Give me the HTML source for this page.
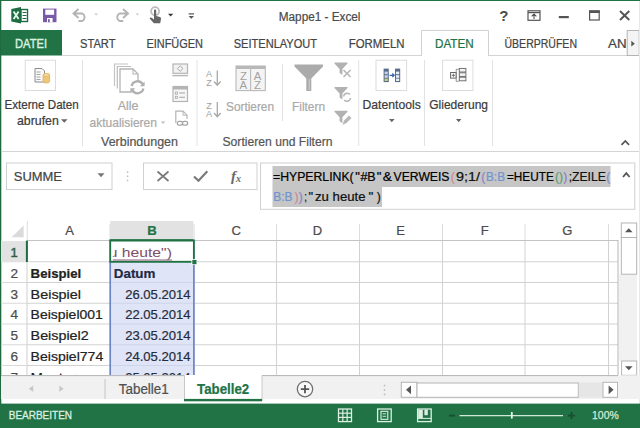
<!DOCTYPE html>
<html><head><meta charset="utf-8"><title>Mappe1 - Excel</title>
<style>
html,body{margin:0;padding:0;width:640px;height:428px;overflow:hidden;background:#fff}
svg{display:block;font-family:"Liberation Sans","DejaVu Sans",sans-serif}
text{white-space:pre}
</style></head><body>
<svg width="640" height="428" viewBox="0 0 640 428">
<rect x="0" y="0" width="640" height="428" fill="#fff" />
<text x="278.75" y="20.5" font-size="12.5" fill="#4a4a4a" font-weight="400" textLength="81.75" lengthAdjust="spacingAndGlyphs"  stroke="#4a4a4a" stroke-width="0.22">Mappe1 - Excel</text>
<rect x="0" y="0" width="640" height="1" fill="#217346" />
<rect x="0" y="0" width="1.3" height="428" fill="#1f6a41" />
<path d="M11.3 9 L21 7 V23.4 L11.3 21.4 Z" fill="#1e6c41"/>
<rect x="21" y="9.5" width="6.5" height="12" fill="#fff" stroke="#1e6c41" stroke-width="1.4" />
<line x1="22.5" y1="12.5" x2="26.5" y2="12.5" stroke="#1e6c41" stroke-width="1"/>
<line x1="22.5" y1="15.5" x2="26.5" y2="15.5" stroke="#1e6c41" stroke-width="1"/>
<line x1="22.5" y1="18.5" x2="26.5" y2="18.5" stroke="#1e6c41" stroke-width="1"/>
<path d="M13.6 11.5 L18.6 19 M18.6 11.5 L13.6 19" stroke="#e6f3ea" stroke-width="1.9" fill="none"/>
<path d="M43 8.6 H56.5 V22.2 H43 Z" fill="#7a5aa6"/>
<rect x="45.3" y="9.6" width="8.8" height="5.2" fill="#fff" />
<rect x="47" y="18" width="5.6" height="4.2" fill="#fff" />
<rect x="48" y="19.2" width="1.8" height="3" fill="#7a5aa6" />
<path d="M78.5 9 L73.5 13.5 L78.5 18 M74 13.5 H82.3 A4.2 4.2 0 0 1 82.3 21 H78.5" stroke="#b4b4b4" stroke-width="1.9" fill="none"/>
<path d="M94.3 13.6 H98 L96.15 15.6 Z" fill="#c8c8c8"/>
<path d="M123 9 L128 13.5 L123 18 M127.5 13.5 H119.5 A4.2 4.2 0 0 0 119.5 21 H123.3" stroke="#b4b4b4" stroke-width="1.9" fill="none"/>
<path d="M135.6 13.6 H139.2 L137.4 15.6 Z" fill="#c8c8c8"/>
<circle cx="155.1" cy="11.2" r="4" fill="none" stroke="#bdbdbd" stroke-width="1.8"/>
<path d="M154 10.6 a1.1 1.1 0 0 1 2.2 0 V16 L160 17 Q161.3 17.5 161 19 L160.2 23.3 H153.9 L149.6 18.4 Q150.3 17 151.7 17.8 L154 19.6 Z" fill="#666"/>
<path d="M168 13.8 H173.2 L170.6 16.6 Z" fill="#333"/>
<rect x="188.6" y="13.3" width="5.4" height="1.2" fill="#555" />
<path d="M188.6 15.9 H194 L191.3 18.8 Z" fill="#555"/>
<text x="499.3" y="21.2" font-size="15" font-weight="700" fill="#4a4a4a">?</text>
<rect x="528" y="10.8" width="12" height="9.5" fill="none" stroke="#555" stroke-width="1.2" />
<line x1="528" y1="12.6" x2="540" y2="12.6" stroke="#555" stroke-width="1.2"/>
<path d="M534 19 V14.2 M531.6 16.4 L534 14 L536.4 16.4" stroke="#555" stroke-width="1.1" fill="none"/>
<rect x="558.8" y="16" width="10" height="2.2" fill="#555" />
<rect x="589.6" y="11" width="9.6" height="9" fill="none" stroke="#555" stroke-width="1.2" />
<rect x="589" y="10.4" width="10.8" height="2.6" fill="#555" />
<path d="M620 11 L629.3 20 M629.3 11 L620 20" stroke="#555" stroke-width="1.9" fill="none"/>
<rect x="1" y="30" width="61" height="25.5" fill="#217346" />
<line x1="62" y1="55.5" x2="640" y2="55.5" stroke="#d4d4d4" stroke-width="1"/>
<path d="M421.5 56 V30.5 H488.5 V56" fill="#fff" stroke="#d0d0d0"/>
<text x="15" y="47.5" font-size="12" fill="#d9f3e2" font-weight="400" textLength="32" lengthAdjust="spacingAndGlyphs" stroke="#d9f3e2" stroke-width="0.35">DATEI</text>
<text x="80" y="47.5" font-size="12" fill="#444" font-weight="400" textLength="35.5" lengthAdjust="spacingAndGlyphs"  stroke="#444" stroke-width="0.22">START</text>
<text x="146.4" y="47.5" font-size="12" fill="#444" font-weight="400" textLength="56.6" lengthAdjust="spacingAndGlyphs"  stroke="#444" stroke-width="0.22">EINFÜGEN</text>
<text x="233.75" y="47.5" font-size="12" fill="#444" font-weight="400" textLength="83.25" lengthAdjust="spacingAndGlyphs"  stroke="#444" stroke-width="0.22">SEITENLAYOUT</text>
<text x="348.75" y="47.5" font-size="12" fill="#444" font-weight="400" textLength="55.75" lengthAdjust="spacingAndGlyphs"  stroke="#444" stroke-width="0.22">FORMELN</text>
<text x="435" y="47.5" font-size="12" fill="#217346" font-weight="400" textLength="38.75" lengthAdjust="spacingAndGlyphs"  stroke="#217346" stroke-width="0.22">DATEN</text>
<text x="504.5" y="47.5" font-size="12" fill="#444" font-weight="400" textLength="72.5" lengthAdjust="spacingAndGlyphs"  stroke="#444" stroke-width="0.22">ÜBERPRÜFEN</text>
<text x="608" y="47.5" font-size="12" fill="#444" font-weight="400" textLength="18.5" lengthAdjust="spacingAndGlyphs"  stroke="#444" stroke-width="0.22">AN</text>
<rect x="627.2" y="30.5" width="12" height="25" fill="#f4f4f4" stroke="#b4b4b4" stroke-width="1" />
<path d="M631.3 40.8 L634.8 43.7 L631.3 46.6 Z" fill="#555"/>
<line x1="1" y1="151.5" x2="640" y2="151.5" stroke="#d4d4d4" stroke-width="1"/>
<line x1="82.5" y1="60" x2="82.5" y2="146" stroke="#e2e2e2" stroke-width="1"/>
<line x1="197" y1="60" x2="197" y2="146" stroke="#e2e2e2" stroke-width="1"/>
<line x1="358.75" y1="60" x2="358.75" y2="146" stroke="#e2e2e2" stroke-width="1"/>
<line x1="424.5" y1="60" x2="424.5" y2="146" stroke="#e2e2e2" stroke-width="1"/>
<line x1="492.5" y1="60" x2="492.5" y2="146" stroke="#e2e2e2" stroke-width="1"/>
<line x1="282.5" y1="64" x2="282.5" y2="121" stroke="#e2e2e2" stroke-width="1"/>
<text x="4.5" y="109.25" font-size="13" fill="#3b3b3b" font-weight="400" textLength="74.25" lengthAdjust="spacingAndGlyphs"  stroke="#3b3b3b" stroke-width="0.22">Externe Daten</text>
<text x="17" y="125" font-size="13" fill="#3b3b3b" font-weight="400" textLength="41.75" lengthAdjust="spacingAndGlyphs"  stroke="#3b3b3b" stroke-width="0.22">abrufen</text>
<text x="117.75" y="110.3" font-size="13" fill="#a9a9a9" font-weight="400" textLength="20.75" lengthAdjust="spacingAndGlyphs"  stroke="#a9a9a9" stroke-width="0.22">Alle</text>
<text x="89.5" y="127" font-size="13" fill="#a9a9a9" font-weight="400" textLength="67.5" lengthAdjust="spacingAndGlyphs"  stroke="#a9a9a9" stroke-width="0.22">aktualisieren</text>
<text x="101" y="146" font-size="13" fill="#555" font-weight="400" textLength="77" lengthAdjust="spacingAndGlyphs"  stroke="#555" stroke-width="0.22">Verbindungen</text>
<text x="226" y="110.5" font-size="13" fill="#a9a9a9" font-weight="400" textLength="48" lengthAdjust="spacingAndGlyphs"  stroke="#a9a9a9" stroke-width="0.22">Sortieren</text>
<text x="292" y="110.5" font-size="13" fill="#a9a9a9" font-weight="400" textLength="33" lengthAdjust="spacingAndGlyphs"  stroke="#a9a9a9" stroke-width="0.22">Filtern</text>
<text x="222.5" y="146" font-size="13" fill="#555" font-weight="400" textLength="110.0" lengthAdjust="spacingAndGlyphs"  stroke="#555" stroke-width="0.22">Sortieren und Filtern</text>
<text x="362.5" y="109.25" font-size="13" fill="#3b3b3b" font-weight="400" textLength="58.25" lengthAdjust="spacingAndGlyphs"  stroke="#3b3b3b" stroke-width="0.22">Datentools</text>
<text x="429.25" y="109.25" font-size="13" fill="#3b3b3b" font-weight="400" textLength="58.75" lengthAdjust="spacingAndGlyphs"  stroke="#3b3b3b" stroke-width="0.22">Gliederung</text>
<rect x="25.2" y="60.2" width="30.3" height="30.3" fill="#fff" stroke="#dcdcdc" stroke-width="1" />
<path d="M35 68.5 H42 L44.5 71 V82 H35 Z" fill="#fafafa" stroke="#8a8a8a" stroke-width="1"/>
<line x1="36.5" y1="72" x2="40.5" y2="72" stroke="#9a9a9a" stroke-width="0.9"/>
<line x1="36.5" y1="74.5" x2="40.5" y2="74.5" stroke="#9a9a9a" stroke-width="0.9"/>
<line x1="36.5" y1="77" x2="40.5" y2="77" stroke="#9a9a9a" stroke-width="0.9"/>
<line x1="36.5" y1="79.5" x2="40.5" y2="79.5" stroke="#9a9a9a" stroke-width="0.9"/>
<path d="M43 75 a3.3 1.4 0 0 1 6.6 0 V81.6 a3.3 1.4 0 0 1 -6.6 0 Z" fill="#eec77a" stroke="#d9a94f" stroke-width="0.7"/>
<ellipse cx="46.3" cy="75" rx="3.3" ry="1.4" fill="#f6dea6" stroke="#d9a94f" stroke-width="0.6"/>
<path d="M61 119.3 H67.6 L64.3 122.8 Z" fill="#666"/>
<path d="M114.5 86 V64 H128" fill="none" stroke="#c4c4c4" stroke-width="1.2"/>
<path d="M117.3 88.5 V66.5 H131" fill="none" stroke="#bcbcbc" stroke-width="1.2"/>
<path d="M120 69 H133 L138 74 V92 H120 Z" fill="#fff" stroke="#b4b4b4" stroke-width="1.3"/>
<path d="M133 69 V74 H138" fill="none" stroke="#b4b4b4" stroke-width="1.1"/>
<circle cx="137.5" cy="87.3" r="7.6" fill="#fff"/>
<path d="M131.6 86 A6 6 0 0 1 142.6 84.2 M143.4 88.6 A6 6 0 0 1 132.4 90.4" fill="none" stroke="#b0b0b0" stroke-width="2.3"/>
<path d="M144.6 81.5 V86.3 H139.8 Z M130.4 93.1 V88.3 H135.2 Z" fill="#b0b0b0"/>
<path d="M160.8 121.4 H165.4 L163.1 123.9 Z" fill="#c0c0c0"/>
<rect x="173" y="64" width="14.5" height="9.3" fill="#f2f2f2" stroke="#b4b4b4" stroke-width="1.2" />
<line x1="172.5" y1="75.6" x2="188" y2="75.6" stroke="#b4b4b4" stroke-width="1.4"/>
<path d="M180.2 65.8 L183 68.6 L180.2 71.4 L177.4 68.6 Z" fill="none" stroke="#aaa" stroke-width="1"/>
<rect x="173" y="86.5" width="14.5" height="15" fill="#f6f6f6" stroke="#b4b4b4" stroke-width="1.2" />
<rect x="173" y="86.5" width="14.5" height="3" fill="#b4b4b4" />
<rect x="175.3" y="92" width="2.2" height="2.2" fill="none" stroke="#aaa" stroke-width="0.8" />
<line x1="179.3" y1="93" x2="185" y2="93" stroke="#aaa" stroke-width="1.1"/>
<rect x="175.3" y="96.3" width="2.2" height="2.2" fill="none" stroke="#aaa" stroke-width="0.8" />
<line x1="179.3" y1="97.3" x2="185" y2="97.3" stroke="#aaa" stroke-width="1.1"/>
<path d="M175.8 123 V111.2 H183 L187 115.2 V119" fill="none" stroke="#b4b4b4" stroke-width="1.2"/>
<path d="M183 111.2 V115.2 H187" fill="none" stroke="#b4b4b4" stroke-width="1"/>
<rect x="177.3" y="121.3" width="5.4" height="3.8" rx="1.9" fill="none" stroke="#a4a4a4" stroke-width="1.2"/>
<rect x="182.3" y="121.3" width="5.4" height="3.8" rx="1.9" fill="none" stroke="#a4a4a4" stroke-width="1.2"/>
<text x="209" y="77.3" font-size="9.2" fill="#a0a0a0" text-anchor="middle">A</text>
<text x="209" y="85.9" font-size="9.2" fill="#a0a0a0" text-anchor="middle">Z</text>
<path d="M217.3 70.5 V85 M214 81.5 L217.3 85.2 L220.6 81.5" stroke="#a8a8a8" stroke-width="1.3" fill="none"/>
<text x="209" y="108.8" font-size="9.2" fill="#a0a0a0" text-anchor="middle">Z</text>
<text x="209" y="117.4" font-size="9.2" fill="#a0a0a0" text-anchor="middle">A</text>
<path d="M217.3 102.0 V116.5 M214 113.0 L217.3 116.7 L220.6 113.0" stroke="#a8a8a8" stroke-width="1.3" fill="none"/>
<rect x="236" y="66" width="29.3" height="24.6" fill="#f4f4f4" stroke="#b8b8b8" stroke-width="1.1" />
<rect x="236" y="66" width="29.3" height="3" fill="#b8b8b8" />
<line x1="250.6" y1="66" x2="250.6" y2="90.6" stroke="#b8b8b8" stroke-width="1.1"/>
<text x="243.4" y="80" font-size="11.4" fill="#a2a2a2" text-anchor="middle">Z</text>
<text x="243.4" y="89.2" font-size="11.4" fill="#a2a2a2" text-anchor="middle">A</text>
<text x="257.6" y="80" font-size="11.4" fill="#a2a2a2" text-anchor="middle">A</text>
<text x="257.6" y="89.2" font-size="11.4" fill="#a2a2a2" text-anchor="middle">Z</text>
<path d="M294.5 64.5 H323 V66.5 L311.3 78.5 V91 H306.3 V78.5 L294.5 66.5 Z" fill="#ababab"/>
<path d="M309.3 79 V90" stroke="#c9c9c9" stroke-width="1.2"/>
<path d="M334.5 62.5 H347.5 V63.5 L342.4 69.0 V75.0 L339.6 73.0 V69.0 L334.5 63.5 Z" fill="#b2b2b2"/>
<path d="M343.5 70 L350.5 77 M350.5 70 L343.5 77" stroke="#b8b8b8" stroke-width="1.7"/>
<path d="M334.5 87 H347.5 V88 L342.4 93.5 V99.5 L339.6 97.5 V93.5 L334.5 88 Z" fill="#b2b2b2"/>
<path d="M343.6 96.5 A3.6 3.6 0 0 1 350 94.6 M350.6 98 A3.6 3.6 0 0 1 344.2 99.9" fill="none" stroke="#b8b8b8" stroke-width="1.6"/>
<path d="M334.5 110.8 H347.5 V111.8 L342.4 117.3 V123.3 L339.6 121.3 V117.3 L334.5 111.8 Z" fill="#b2b2b2"/>
<path d="M342.5 125 L344 120.5 L349 115.5 L351.5 118 L346.5 123 Z" fill="#b8b8b8"/>
<rect x="376" y="60.2" width="30.6" height="30.3" fill="#fff" stroke="#dcdcdc" stroke-width="1" />
<rect x="383.6" y="68.6" width="5.2" height="13.5" fill="#5a6e8c" />
<rect x="395" y="68.6" width="5.2" height="13.5" fill="#5a6e8c" />
<rect x="384.6" y="71.6" width="3.2" height="2.6" fill="#c8d4e6" />
<rect x="384.6" y="75.2" width="3.2" height="2.6" fill="#c8d4e6" />
<rect x="384.6" y="78.6" width="3.2" height="2.4" fill="#c9cf6a" />
<rect x="396" y="71.6" width="3.2" height="2.6" fill="#e6eef6" />
<rect x="396" y="75.2" width="3.2" height="2.6" fill="#e6eef6" />
<rect x="396" y="78.6" width="3.2" height="2.4" fill="#e6eef6" />
<path d="M389.6 75.3 H393.6 M392.3 73.5 L394.2 75.3 L392.3 77.1" stroke="#3c62a8" stroke-width="1.2" fill="none"/>
<path d="M389 119 H394.6 L391.8 122.3 Z" fill="#666"/>
<rect x="442.6" y="60.2" width="30.3" height="30.3" fill="#fff" stroke="#dcdcdc" stroke-width="1" />
<rect x="450.6" y="72.5" width="5.6" height="5.6" fill="#fff" stroke="#666" stroke-width="1" />
<path d="M451.8 75.3 H455 M453.4 73.7 V76.9" stroke="#666" stroke-width="0.9"/>
<path d="M458.8 69.3 H456.2 V81.3 H458.8" fill="none" stroke="#888" stroke-width="0.9"/>
<rect x="459.3" y="68.4" width="6.6" height="3.6" fill="#f4f4f4" stroke="#666" stroke-width="0.9" />
<rect x="459.3" y="72.8" width="6.6" height="3.6" fill="#f4f4f4" stroke="#666" stroke-width="0.9" />
<rect x="459.3" y="77.2" width="6.6" height="3.6" fill="#f4f4f4" stroke="#666" stroke-width="0.9" />
<path d="M456 119 H461.4 L458.7 122.3 Z" fill="#666"/>
<path d="M621.5 144.8 L625.3 141 L629.1 144.8" stroke="#555" stroke-width="1.7" fill="none"/>
<rect x="6.5" y="163" width="105.5" height="26.5" fill="#fff" stroke="#d0d0d0" stroke-width="1" />
<text x="13.75" y="180.75" font-size="12" fill="#444" font-weight="400" textLength="48.25" lengthAdjust="spacingAndGlyphs"  stroke="#444" stroke-width="0.22">SUMME</text>
<path d="M97.5 173.3 H104.5 L101 177.2 Z" fill="#777"/>
<rect x="126.8" y="171.3" width="1.5" height="1.5" fill="#bdbdbd" />
<rect x="126.8" y="175.5" width="1.5" height="1.5" fill="#bdbdbd" />
<rect x="126.8" y="179.8" width="1.5" height="1.5" fill="#bdbdbd" />
<rect x="143.5" y="163" width="113.5" height="26.5" fill="#fff" stroke="#d0d0d0" stroke-width="1" />
<path d="M157.5 171.5 L168.5 181 M168.5 171.5 L157.5 181" stroke="#7a7a7a" stroke-width="1.7" fill="none"/>
<path d="M194 176.5 L198.5 180.8 L207.3 171.3" stroke="#7a7a7a" stroke-width="2.2" fill="none"/>
<text x="231" y="181" font-family="Liberation Serif,serif" font-style="italic" font-size="15" fill="#6a6a6a" font-weight="700">f<tspan font-size="10" dy="0.5">x</tspan></text>
<rect x="260.5" y="163" width="374.3" height="46.3" fill="#fff" stroke="#d0d0d0" stroke-width="1" />
<rect x="272.5" y="166" width="338" height="21" fill="#c6c6c6" />
<rect x="272.5" y="186.5" width="109.5" height="20.5" fill="#c6c6c6" />
<text x="273" y="180.75" font-size="12.2" fill="#000" font-weight="400" textLength="80.7" lengthAdjust="spacingAndGlyphs"  stroke="#000" stroke-width="0.22">=HYPERLINK(</text>
<text x="355.2" y="180.75" font-size="12.2" fill="#000" font-weight="400" textLength="4.6" lengthAdjust="spacingAndGlyphs"  stroke="#000" stroke-width="0.22">"</text>
<text x="360.4" y="180.75" font-size="12.2" fill="#000" font-weight="400" textLength="15.3" lengthAdjust="spacingAndGlyphs"  stroke="#000" stroke-width="0.22">#B</text>
<text x="376.7" y="180.75" font-size="12.2" fill="#000" font-weight="400" textLength="4.6" lengthAdjust="spacingAndGlyphs"  stroke="#000" stroke-width="0.22">"</text>
<text x="382.8" y="180.75" font-size="12.2" fill="#000" font-weight="400" textLength="9.2" lengthAdjust="spacingAndGlyphs"  stroke="#000" stroke-width="0.22">&amp;</text>
<text x="393.6" y="180.75" font-size="12.2" fill="#000" font-weight="400" textLength="55.9" lengthAdjust="spacingAndGlyphs"  stroke="#000" stroke-width="0.22">VERWEIS</text>
<text x="452.7" y="180.75" font-size="12.2" fill="#d28c8c" font-weight="400" text-anchor="middle"  stroke="#d28c8c" stroke-width="0.22">(</text>
<text x="456" y="180.75" font-size="12.2" fill="#111" font-weight="400" textLength="24" lengthAdjust="spacingAndGlyphs"  stroke="#111" stroke-width="0.22">9;1/</text>
<text x="483.3" y="180.75" font-size="12.2" fill="#8f7fc0" font-weight="400" text-anchor="middle"  stroke="#8f7fc0" stroke-width="0.22">(</text>
<text x="486" y="180.75" font-size="12.2" fill="#6f95d0" font-weight="400" textLength="19" lengthAdjust="spacingAndGlyphs"  stroke="#6f95d0" stroke-width="0.22">B:B</text>
<text x="507" y="180.75" font-size="12.2" fill="#000" font-weight="400" textLength="46.75" lengthAdjust="spacingAndGlyphs"  stroke="#000" stroke-width="0.22">=HEUTE</text>
<text x="559" y="180.75" font-size="12.2" fill="#5f9f6f" font-weight="400" text-anchor="middle"  stroke="#5f9f6f" stroke-width="0.22">()</text>
<text x="565.3" y="180.75" font-size="12.2" fill="#8f7fc0" font-weight="400" text-anchor="middle"  stroke="#8f7fc0" stroke-width="0.22">)</text>
<text x="568.75" y="180.75" font-size="12.2" fill="#111" font-weight="400" textLength="37.0" lengthAdjust="spacingAndGlyphs"  stroke="#111" stroke-width="0.22">;ZEILE</text>
<text x="608.3" y="180.75" font-size="12.2" fill="#7f8fc8" font-weight="400" text-anchor="middle"  stroke="#7f8fc8" stroke-width="0.22">(</text>
<text x="273.2" y="201.25" font-size="12.2" fill="#6f95d0" font-weight="400" textLength="19.4" lengthAdjust="spacingAndGlyphs"  stroke="#6f95d0" stroke-width="0.22">B:B</text>
<text x="296.5" y="201.25" font-size="12.2" fill="#c88a9a" font-weight="400" text-anchor="middle"  stroke="#c88a9a" stroke-width="0.22">)</text>
<text x="300.7" y="201.25" font-size="12.2" fill="#8f7fc0" font-weight="400" text-anchor="middle"  stroke="#8f7fc0" stroke-width="0.22">)</text>
<text x="304.3" y="201.25" font-size="12.2" fill="#111" font-weight="400" textLength="2.7" lengthAdjust="spacingAndGlyphs"  stroke="#111" stroke-width="0.22">;</text>
<text x="308.4" y="201.25" font-size="12.2" fill="#111" font-weight="400" textLength="4.6" lengthAdjust="spacingAndGlyphs"  stroke="#111" stroke-width="0.22">"</text>
<text x="315" y="201.25" font-size="12.2" fill="#111" font-weight="400" textLength="50.5" lengthAdjust="spacingAndGlyphs"  stroke="#111" stroke-width="0.22">zu heute</text>
<text x="368.6" y="201.25" font-size="12.2" fill="#111" font-weight="400" textLength="4.8" lengthAdjust="spacingAndGlyphs"  stroke="#111" stroke-width="0.22">"</text>
<text x="378.8" y="201.25" font-size="12.2" fill="#111" font-weight="400" text-anchor="middle"  stroke="#111" stroke-width="0.22">)</text>
<path d="M623 177 L626.3 173.2 L629.6 177" stroke="#555" stroke-width="1.8" fill="none"/>
<rect x="110.3" y="221" width="83" height="18.6" fill="#e2e2e2" />
<rect x="1" y="241.3" width="25.5" height="20.6" fill="#e2e2e2" />
<rect x="110" y="262" width="84" height="113.5" fill="#dfe5f6" />
<line x1="110" y1="224" x2="110" y2="240.5" stroke="#dcdcdc" stroke-width="1"/>
<line x1="194" y1="224" x2="194" y2="240.5" stroke="#dcdcdc" stroke-width="1"/>
<line x1="276.5" y1="224" x2="276.5" y2="240.5" stroke="#dcdcdc" stroke-width="1"/>
<line x1="359.5" y1="224" x2="359.5" y2="240.5" stroke="#dcdcdc" stroke-width="1"/>
<line x1="442.5" y1="224" x2="442.5" y2="240.5" stroke="#dcdcdc" stroke-width="1"/>
<line x1="525" y1="224" x2="525" y2="240.5" stroke="#dcdcdc" stroke-width="1"/>
<line x1="608.5" y1="224" x2="608.5" y2="240.5" stroke="#dcdcdc" stroke-width="1"/>
<line x1="194" y1="240.5" x2="194" y2="375.3" stroke="#d2d2d2" stroke-width="1"/>
<line x1="276.5" y1="240.5" x2="276.5" y2="375.3" stroke="#d2d2d2" stroke-width="1"/>
<line x1="359.5" y1="240.5" x2="359.5" y2="375.3" stroke="#d2d2d2" stroke-width="1"/>
<line x1="442.5" y1="240.5" x2="442.5" y2="375.3" stroke="#d2d2d2" stroke-width="1"/>
<line x1="525" y1="240.5" x2="525" y2="375.3" stroke="#d2d2d2" stroke-width="1"/>
<line x1="608.5" y1="240.5" x2="608.5" y2="375.3" stroke="#d2d2d2" stroke-width="1"/>
<line x1="27" y1="241" x2="27" y2="375.3" stroke="#cfcfcf" stroke-width="1"/>
<line x1="1" y1="261.75" x2="27" y2="261.75" stroke="#d9d9d9" stroke-width="1"/>
<line x1="27" y1="261.75" x2="110" y2="261.75" stroke="#d2d2d2" stroke-width="1"/>
<line x1="110" y1="261.75" x2="194" y2="261.75" stroke="#cdd5ea" stroke-width="1"/>
<line x1="194" y1="261.75" x2="618" y2="261.75" stroke="#d2d2d2" stroke-width="1"/>
<line x1="1" y1="282.5" x2="27" y2="282.5" stroke="#d9d9d9" stroke-width="1"/>
<line x1="27" y1="282.5" x2="110" y2="282.5" stroke="#d2d2d2" stroke-width="1"/>
<line x1="110" y1="282.5" x2="194" y2="282.5" stroke="#cdd5ea" stroke-width="1"/>
<line x1="194" y1="282.5" x2="618" y2="282.5" stroke="#d2d2d2" stroke-width="1"/>
<line x1="1" y1="303.25" x2="27" y2="303.25" stroke="#d9d9d9" stroke-width="1"/>
<line x1="27" y1="303.25" x2="110" y2="303.25" stroke="#d2d2d2" stroke-width="1"/>
<line x1="110" y1="303.25" x2="194" y2="303.25" stroke="#cdd5ea" stroke-width="1"/>
<line x1="194" y1="303.25" x2="618" y2="303.25" stroke="#d2d2d2" stroke-width="1"/>
<line x1="1" y1="324.0" x2="27" y2="324.0" stroke="#d9d9d9" stroke-width="1"/>
<line x1="27" y1="324.0" x2="110" y2="324.0" stroke="#d2d2d2" stroke-width="1"/>
<line x1="110" y1="324.0" x2="194" y2="324.0" stroke="#cdd5ea" stroke-width="1"/>
<line x1="194" y1="324.0" x2="618" y2="324.0" stroke="#d2d2d2" stroke-width="1"/>
<line x1="1" y1="344.75" x2="27" y2="344.75" stroke="#d9d9d9" stroke-width="1"/>
<line x1="27" y1="344.75" x2="110" y2="344.75" stroke="#d2d2d2" stroke-width="1"/>
<line x1="110" y1="344.75" x2="194" y2="344.75" stroke="#cdd5ea" stroke-width="1"/>
<line x1="194" y1="344.75" x2="618" y2="344.75" stroke="#d2d2d2" stroke-width="1"/>
<line x1="1" y1="365.5" x2="27" y2="365.5" stroke="#d9d9d9" stroke-width="1"/>
<line x1="27" y1="365.5" x2="110" y2="365.5" stroke="#d2d2d2" stroke-width="1"/>
<line x1="110" y1="365.5" x2="194" y2="365.5" stroke="#cdd5ea" stroke-width="1"/>
<line x1="194" y1="365.5" x2="618" y2="365.5" stroke="#d2d2d2" stroke-width="1"/>
<line x1="27" y1="240.5" x2="618" y2="240.5" stroke="#c4c4c4" stroke-width="1"/>
<line x1="27.3" y1="221" x2="27.3" y2="240.5" stroke="#dedede" stroke-width="1"/>
<line x1="618" y1="240" x2="618" y2="375.8" stroke="#b4b4b4" stroke-width="1"/>
<path d="M23.6 225.6 V237.2 H11.6 Z" fill="#dadada"/>
<text x="69.6" y="235.3" font-size="13" fill="#4c4c4c" font-weight="400" text-anchor="middle"  stroke="#4c4c4c" stroke-width="0.22">A</text>
<text x="152.1" y="235.3" font-size="13.2" fill="#217346" font-weight="700" text-anchor="middle"  stroke="#217346" stroke-width="0.22">B</text>
<text x="236.3" y="235.3" font-size="13" fill="#4c4c4c" font-weight="400" text-anchor="middle"  stroke="#4c4c4c" stroke-width="0.22">C</text>
<text x="317.5" y="235.3" font-size="13" fill="#4c4c4c" font-weight="400" text-anchor="middle"  stroke="#4c4c4c" stroke-width="0.22">D</text>
<text x="400.7" y="235.3" font-size="13" fill="#4c4c4c" font-weight="400" text-anchor="middle"  stroke="#4c4c4c" stroke-width="0.22">E</text>
<text x="484.8" y="235.3" font-size="13" fill="#4c4c4c" font-weight="400" text-anchor="middle"  stroke="#4c4c4c" stroke-width="0.22">F</text>
<text x="567.2" y="235.3" font-size="13" fill="#4c4c4c" font-weight="400" text-anchor="middle"  stroke="#4c4c4c" stroke-width="0.22">G</text>
<clipPath id="gc"><rect x="0" y="220" width="618" height="155.3"/></clipPath>
<g clip-path="url(#gc)">
<text x="14.2" y="257.15" font-size="13.6" fill="#2f5f45" font-weight="400" text-anchor="middle"  stroke="#2f5f45" stroke-width="0.22">1</text>
<text x="14.2" y="277.9" font-size="13.6" fill="#4c4c4c" font-weight="400" text-anchor="middle"  stroke="#4c4c4c" stroke-width="0.22">2</text>
<text x="14.2" y="298.65" font-size="13.6" fill="#4c4c4c" font-weight="400" text-anchor="middle"  stroke="#4c4c4c" stroke-width="0.22">3</text>
<text x="14.2" y="319.4" font-size="13.6" fill="#4c4c4c" font-weight="400" text-anchor="middle"  stroke="#4c4c4c" stroke-width="0.22">4</text>
<text x="14.2" y="340.15" font-size="13.6" fill="#4c4c4c" font-weight="400" text-anchor="middle"  stroke="#4c4c4c" stroke-width="0.22">5</text>
<text x="14.2" y="360.9" font-size="13.6" fill="#4c4c4c" font-weight="400" text-anchor="middle"  stroke="#4c4c4c" stroke-width="0.22">6</text>
<text x="14.2" y="381.65" font-size="13.6" fill="#4c4c4c" font-weight="400" text-anchor="middle"  stroke="#4c4c4c" stroke-width="0.22">7</text>
<text x="30.6" y="277.8" font-size="13" fill="#222" font-weight="700" textLength="50.7" lengthAdjust="spacingAndGlyphs"  stroke="#222" stroke-width="0.22">Beispiel</text>
<text x="113.8" y="277.8" font-size="13" fill="#1f2a44" font-weight="700" textLength="41.6" lengthAdjust="spacingAndGlyphs"  stroke="#1f2a44" stroke-width="0.22">Datum</text>
<text x="30.6" y="298.55" font-size="13" fill="#222" font-weight="400" textLength="50.4" lengthAdjust="spacingAndGlyphs"  stroke="#222" stroke-width="0.22">Beispiel</text>
<text x="30.6" y="319.3" font-size="13" fill="#222" font-weight="400" textLength="72.2" lengthAdjust="spacingAndGlyphs"  stroke="#222" stroke-width="0.22">Beispiel001</text>
<text x="30.6" y="340.05" font-size="13" fill="#222" font-weight="400" textLength="58.15" lengthAdjust="spacingAndGlyphs"  stroke="#222" stroke-width="0.22">Beispiel2</text>
<text x="30.6" y="360.8" font-size="13" fill="#222" font-weight="400" textLength="72.65" lengthAdjust="spacingAndGlyphs"  stroke="#222" stroke-width="0.22">Beispiel774</text>
<text x="30.6" y="381.55" font-size="13" fill="#222" font-weight="400" textLength="45.4" lengthAdjust="spacingAndGlyphs"  stroke="#222" stroke-width="0.22">Muster</text>
<text x="125.2" y="298.55" font-size="13" fill="#262c40" font-weight="400" textLength="65.4" lengthAdjust="spacingAndGlyphs"  stroke="#262c40" stroke-width="0.22">26.05.2014</text>
<text x="125.2" y="319.3" font-size="13" fill="#262c40" font-weight="400" textLength="65.4" lengthAdjust="spacingAndGlyphs"  stroke="#262c40" stroke-width="0.22">22.05.2014</text>
<text x="125.2" y="340.05" font-size="13" fill="#262c40" font-weight="400" textLength="65.4" lengthAdjust="spacingAndGlyphs"  stroke="#262c40" stroke-width="0.22">23.05.2014</text>
<text x="125.2" y="360.8" font-size="13" fill="#262c40" font-weight="400" textLength="65.4" lengthAdjust="spacingAndGlyphs"  stroke="#262c40" stroke-width="0.22">24.05.2014</text>
<text x="125.2" y="381.55" font-size="13" fill="#262c40" font-weight="400" textLength="65.4" lengthAdjust="spacingAndGlyphs"  stroke="#262c40" stroke-width="0.22">25.05.2014</text>
</g>
<line x1="110.2" y1="262" x2="110.2" y2="375.3" stroke="#6b86c6" stroke-width="1.7"/>
<line x1="193.9" y1="262" x2="193.9" y2="375.3" stroke="#6b86c6" stroke-width="1.7"/>
<rect x="110.2" y="240.4" width="83.7" height="21.4" fill="#fff" stroke="#217346" stroke-width="1.9" />
<line x1="110.3" y1="240.3" x2="193.2" y2="240.3" stroke="#217346" stroke-width="1.9"/>
<rect x="1" y="241.3" width="25.2" height="20.6" fill="#e2e2e2" />
<text x="14.2" y="256.75" font-size="13" fill="#2f5f45" font-weight="400" text-anchor="middle" stroke="#2f5f45" stroke-width="0.45">1</text>
<line x1="26.9" y1="240.6" x2="26.9" y2="262" stroke="#1f6a41" stroke-width="2"/>
<rect x="191.4" y="259.2" width="5.6" height="5.6" fill="#fff" />
<rect x="192.3" y="260" width="4.2" height="4.2" fill="#217346" />
<clipPath id="ac"><rect x="112.8" y="242" width="79" height="19"/></clipPath>
<g clip-path="url(#ac)">
<text x="171.9" y="256.7" font-size="13.3" text-anchor="end" fill="#7d5068" textLength="71" lengthAdjust="spacingAndGlyphs">zu heute&quot;)</text>
<line x1="112" y1="260" x2="171.9" y2="260" stroke="#8a5a72" stroke-width="1"/>
</g>
<rect x="619" y="274.5" width="18" height="86.5" fill="#f1f1f1" />
<rect x="621.3" y="223" width="15.4" height="14.5" fill="#fff" stroke="#b4b4b4" stroke-width="1" />
<path d="M625 232.2 H632.6 L628.8 228.2 Z" fill="#555"/>
<rect x="621.3" y="237.5" width="15.4" height="36.7" fill="#fff" stroke="#b4b4b4" stroke-width="1" />
<rect x="621.6" y="361" width="15.1" height="14.3" fill="#fff" stroke="#b4b4b4" stroke-width="1" />
<path d="M625 366.2 H632.6 L628.8 370.2 Z" fill="#555"/>
<rect x="639" y="1" width="1" height="403" fill="#dcefe3" />
<rect x="1" y="375.3" width="639" height="23.7" fill="#f1f1f1" />
<line x1="1" y1="375.6" x2="618" y2="375.6" stroke="#b4b4b4" stroke-width="1"/>
<rect x="184.5" y="375" width="77.5" height="24.5" fill="#fff" />
<line x1="184.5" y1="375.3" x2="184.5" y2="399" stroke="#c8c8c8" stroke-width="1"/>
<line x1="262" y1="375.3" x2="262" y2="399" stroke="#c8c8c8" stroke-width="1"/>
<rect x="184" y="398.9" width="78.2" height="2.4" fill="#217346" />
<line x1="105" y1="379" x2="105" y2="399" stroke="#c4c4c4" stroke-width="1"/>
<path d="M33.2 385.5 V392 L28.8 388.75 Z" fill="#c8c8c8"/>
<path d="M59.3 385.5 V392 L63.7 388.75 Z" fill="#c8c8c8"/>
<text x="118.75" y="393.5" font-size="14" fill="#505050" font-weight="400" textLength="50.0" lengthAdjust="spacingAndGlyphs"  stroke="#505050" stroke-width="0.22">Tabelle1</text>
<text x="197" y="393.5" font-size="14" fill="#217346" font-weight="700" textLength="52.25" lengthAdjust="spacingAndGlyphs"  stroke="#217346" stroke-width="0.22">Tabelle2</text>
<circle cx="305" cy="389.1" r="7.7" fill="#f8f8f8" stroke="#707070" stroke-width="1.3"/>
<path d="M300.8 389.1 H309.2 M305 384.9 V393.3" stroke="#555" stroke-width="1.8"/>
<rect x="383.8" y="384.8" width="1.5" height="1.5" fill="#b8b8b8" />
<rect x="383.8" y="389.3" width="1.5" height="1.5" fill="#b8b8b8" />
<rect x="383.8" y="393.7" width="1.5" height="1.5" fill="#b8b8b8" />
<rect x="401.3" y="382.3" width="15.7" height="15" fill="#fff" stroke="#b4b4b4" stroke-width="1" />
<path d="M411 385.4 V394.2 L406 389.8 Z" fill="#555"/>
<rect x="417" y="383" width="161.3" height="14.3" fill="#fff" stroke="#b4b4b4" stroke-width="1" />
<rect x="578.8" y="382.5" width="24" height="15" fill="#e6e6e6" />
<rect x="603" y="382.3" width="14.5" height="15" fill="#fff" stroke="#b4b4b4" stroke-width="1" />
<path d="M608.6 385.4 V394.2 L613.6 389.8 Z" fill="#555"/>
<rect x="0" y="403.6" width="640" height="24.4" fill="#217346" />
<text x="8.75" y="419.25" font-size="11" fill="#daf0e1" font-weight="400" textLength="63.25" lengthAdjust="spacingAndGlyphs" stroke="#daf0e1" stroke-width="0.3">BEARBEITEN</text>
<text x="592" y="419.25" font-size="11" fill="#d4ecdc" font-weight="400" textLength="26.75" lengthAdjust="spacingAndGlyphs" stroke="#d4ecdc" stroke-width="0.25">100%</text>
<rect x="338.5" y="409" width="13" height="12.6" fill="none" stroke="#dcefe3" stroke-width="1.3" />
<line x1="342.8333333333333" y1="409" x2="342.8333333333333" y2="421.6" stroke="#dcefe3" stroke-width="1.2"/>
<line x1="338.5" y1="413.2" x2="351.5" y2="413.2" stroke="#dcefe3" stroke-width="1.2"/>
<line x1="347.1666666666667" y1="409" x2="347.1666666666667" y2="421.6" stroke="#dcefe3" stroke-width="1.2"/>
<line x1="338.5" y1="417.4" x2="351.5" y2="417.4" stroke="#dcefe3" stroke-width="1.2"/>
<rect x="377.6" y="409" width="13.6" height="12.6" fill="none" stroke="#dcefe3" stroke-width="1.3" />
<rect x="381" y="411.3" width="6.8" height="8" fill="none" stroke="#dcefe3" stroke-width="1.1" />
<line x1="382.6" y1="413.8" x2="386.2" y2="413.8" stroke="#dcefe3" stroke-width="0.9"/>
<line x1="382.6" y1="416.3" x2="386.2" y2="416.3" stroke="#dcefe3" stroke-width="0.9"/>
<rect x="417.6" y="409" width="13.6" height="12.6" fill="none" stroke="#dcefe3" stroke-width="1.3" />
<rect x="418.2" y="409.6" width="4.6" height="8.6" fill="#dcefe3" />
<rect x="424.4" y="409.6" width="3.4" height="5.6" fill="#dcefe3" />
<line x1="418" y1="418.4" x2="431" y2="418.4" stroke="#dcefe3" stroke-width="1"/>
<rect x="448.8" y="414.7" width="6.2" height="1.8" fill="#174f30" />
<line x1="459.5" y1="415.6" x2="563" y2="415.6" stroke="#cfe8d8" stroke-width="1.3"/>
<rect x="510.9" y="412" width="1.8" height="6.6" fill="#e6f4ea" />
<path d="M568 415.6 H575 M571.5 412.1 V419.1" stroke="#174f30" stroke-width="1.9"/>
</svg>
</body></html>
